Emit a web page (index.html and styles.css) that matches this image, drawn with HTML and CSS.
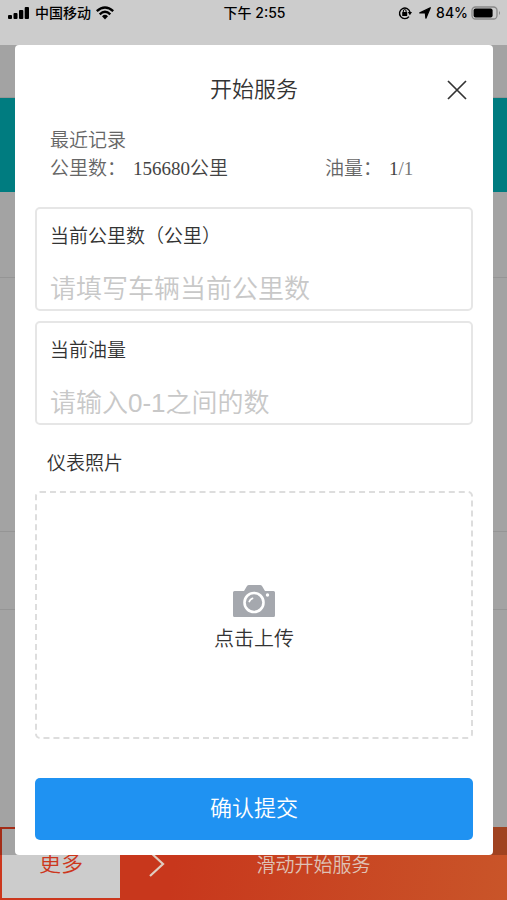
FILE: index.html
```html
<!DOCTYPE html>
<html lang="zh-CN">
<head>
<meta charset="utf-8">
<meta name="viewport" content="width=device-width, initial-scale=1">
<title>开始服务</title>
<link rel="stylesheet" href="styles.css">
</head>
<body>
<div class="page">
  <header class="status">
    <div class="status-side">
      <svg width="22" height="14" viewBox="0 0 22 14" aria-hidden="true"><rect x="0" y="9" width="4" height="4" rx="1"/><rect x="5.500" y="7" width="4" height="6" rx="1"/><rect x="11" y="4" width="4.300" height="9" rx="1"/><rect x="16.700" y="1" width="4.300" height="12" rx="1"/></svg>
      <span class="carrier">中国移动</span>
      <svg width="18" height="14" viewBox="0 0 18 14" fill="none" stroke="#000" stroke-width="2.4" aria-hidden="true"><path d="M.8 5.200Q9-2.200 17.200 5.200"/><path d="M3.700 8.300Q9 3.400 14.300 8.300"/><path d="M6 10.200Q9 7.400 12 10.200L9 13.400Z" fill="#000" stroke="none"/></svg>
    </div>
    <time class="clock">下午 2:55</time>
    <div class="status-side status-end">
      <svg class="lock" width="14" height="14" viewBox="0 0 14 14" aria-hidden="true"><path d="M11 10.600A5.300 5.300 0 1 1 12 6.200" fill="none" stroke="#000" stroke-width="1.400"/><path d="M9.800 6h4.200l-2.100 3.200z"/><rect x="4.200" y="6" width="5" height="4" rx=".6"/><path d="M5.300 6.500V5a1.400 1.400 0 0 1 2.800 0v1.500" fill="none" stroke="#000"/></svg>
      <svg class="arrow" width="12" height="12" viewBox="0 0 12 12" aria-hidden="true"><path d="M11.300.7 6.900 11.200 6.300 5.700.8 5.900Z" stroke="#000" stroke-width="1.200" stroke-linejoin="round"/></svg>
      <span>84%</span>
      <svg width="30" height="14" viewBox="0 0 30 14" aria-hidden="true"><rect x="1" y="1" width="25" height="12" rx="3.500" fill="none" stroke="#888" stroke-width="1.300"/><rect x="2.600" y="2.600" width="19" height="8.800" rx="2"/><path d="M28 5Q30 7 28 9Z" fill="#888"/></svg>
    </div>
  </header>
  <main class="backdrop">
    <div class="section section-top"></div>
    <div class="section banner"></div>
    <div class="section section-info"></div>
    <div class="section section-detail"></div>
    <div class="section section-row"></div>
  </main>
  <footer class="actions">
    <button class="more" type="button">更多</button>
    <div class="slide">
      <svg width="18" height="28" viewBox="0 0 18 28" fill="none" stroke="#e0cdc0" stroke-width="2.200" aria-hidden="true"><path d="M2 2 15 14 2 26"/></svg>
      <span class="slide-text">滑动开始服务</span>
    </div>
  </footer>
  <div class="scrim">
    <form class="dialog" role="dialog" aria-labelledby="dialog-title">
      <div class="dialog-head">
        <h1 id="dialog-title">开始服务</h1>
        <button class="close" type="button" aria-label="关闭"><svg width="20" height="20" viewBox="0 0 20 20" fill="none" stroke="#333" stroke-width="1.700" aria-hidden="true"><path d="M1 1 19 19M19 1 1 19"/></svg></button>
      </div>
      <section class="record">
        <div>最近记录</div>
        <div class="record-row">
          <div class="record-item"><span>公里数：</span><span class="number">156680公里</span></div>
          <div class="record-item"><span>油量：</span><span class="number">1<span class="total">/1</span></span></div>
        </div>
      </section>
      <div class="field">
        <label for="mileage">当前公里数（公里）</label>
        <input id="mileage" type="text" inputmode="numeric" placeholder="请填写车辆当前公里数">
      </div>
      <div class="field">
        <label for="fuel">当前油量</label>
        <input id="fuel" type="text" inputmode="decimal" placeholder="请输入0-1之间的数">
      </div>
      <h2 class="photo-title">仪表照片</h2>
      <button class="upload" type="button">
        <svg width="42" height="32" viewBox="0 0 42 32" aria-hidden="true"><path d="M1.500 6H11l3-5q.6-1 2-1h11q1.400 0 2 1l3 5h8.500Q42 6 42 7.500v23q0 1.500-1.500 1.500h-39Q0 32 0 30.500v-23Q0 6 1.500 6Z" fill="#a5a8ae"/><circle cx="21" cy="17.500" r="9.500" fill="none" stroke="#fff" stroke-width="2.600"/><path d="M16.300 16.500a5 5 0 0 1 3.200-3.200" fill="none" stroke="#fff" stroke-width="1.800" stroke-linecap="round"/><circle cx="34.500" cy="10" r="1.700" fill="#fff"/></svg>
        <span>点击上传</span>
      </button>
      <button class="submit" type="submit">确认提交</button>
    </form>
  </div>
</div>
</body>
</html>
```
FILE: styles.css
```css
* {
  box-sizing: border-box;
}

body {
  margin: 0;
  background: #ccc;
  color: #333;
  font-family: "Liberation Sans", "Noto Sans CJK SC", sans-serif;
  font-size: 20px;
  font-weight: 350;
}

button,
input {
  margin: 0;
  padding: 0;
  border: 0;
  background: none;
  color: inherit;
  font: inherit;
}

svg {
  display: block;
  flex: none;
}

.page {
  position: relative;
  display: flex;
  flex-direction: column;
  min-height: 100vh;
}

.status {
  display: grid;
  grid-template-columns: 1fr auto 1fr;
  align-items: start;
  height: 45px;
  padding: 3px 6px 0 8px;
  color: #000;
  font-family: Inter, "Noto Sans CJK SC", sans-serif;
  font-size: 14px;
  font-weight: 500;
  line-height: 20px;
}

.status-side {
  display: flex;
  align-items: center;
  gap: 5px;
}

.status-end {
  justify-content: flex-end;
  gap: 3px;
}

.lock {
  margin-right: 4px;
}

.arrow {
  margin-right: 2px;
}

.backdrop {
  display: flex;
  flex: 1;
  flex-direction: column;
}

.section {
  border-bottom: 1px solid #bbb;
}

.section-top {
  height: 53px;
}

.banner {
  height: 94px;
  border: 0;
  background: #009ba0;
}

.section-info {
  height: 86px;
}

.section-detail {
  height: 254px;
}

.section-row {
  height: 78px;
}

.actions {
  display: flex;
  height: 73px;
}

.more {
  width: 120px;
  border: 2px solid #cc371d;
  border-right: 0;
  background: #ccc;
  color: #cc371d;
  font-size: 22px;
  line-height: 28px;
}

.slide {
  display: grid;
  flex: 1;
  grid-template-columns: 18px 1fr 18px;
  align-items: center;
  padding: 0 28px;
  background: linear-gradient(100deg, #c8371c 15%, #c95529);
  color: #dfc2b6;
  font-size: 19px;
}

.slide-text {
  text-align: center;
}

.scrim {
  position: absolute;
  inset: 45px 0 45px;
  display: flex;
  padding: 0 14px 0 15px;
  background: rgba(0, 0, 0, 0.2);
}

.dialog {
  display: flex;
  flex: 1;
  flex-direction: column;
  padding: 0 20px 15px;
  border-radius: 4px;
  background: #fff;
}

.dialog-head {
  display: grid;
  grid-template-columns: 20px 1fr 20px;
  align-items: center;
  height: 82px;
  padding: 8px 6px 0;
}

h1 {
  grid-column: 2;
  margin: 0;
  font-size: 22px;
  font-weight: inherit;
  line-height: 28px;
  text-align: center;
}

.record {
  margin-bottom: 24px;
  padding: 0 15px;
  color: #666;
  font-size: 19px;
  line-height: 28px;
}

.record-row {
  display: grid;
  grid-template-columns: 275px 1fr;
}

.record-item {
  display: flex;
  gap: 7px;
}

.number {
  color: #444;
  font-family: "Liberation Serif", "Noto Sans CJK SC", serif;
}

.total {
  color: #777;
}

.field {
  display: flex;
  flex-direction: column;
  height: 104px;
  margin-bottom: 10px;
  padding: 14px 13px 0;
  border: 2px solid #e6e6e6;
  border-radius: 5px;
}

.field label {
  font-size: 19px;
  line-height: 28px;
}

.field input {
  width: 100%;
  height: 40px;
  margin-top: 18px;
  font-size: 26px;
  outline: 0;
}

.field input::placeholder {
  color: #c8c8c8;
}

.photo-title {
  margin: 15px 0 13px 12px;
  font-size: 19px;
  font-weight: inherit;
  line-height: 28px;
}

.upload {
  display: flex;
  flex: 1;
  flex-direction: column;
  align-items: center;
  justify-content: center;
  gap: 8px;
  min-height: 180px;
  padding-top: 8px;
  border: 2px dashed #ddd;
  border-radius: 5px;
  line-height: 28px;
}

.submit {
  height: 62px;
  margin-top: 39px;
  border-radius: 5px;
  background: #1f92f2;
  color: #fff;
  font-size: 22px;
  line-height: 28px;
}
```
